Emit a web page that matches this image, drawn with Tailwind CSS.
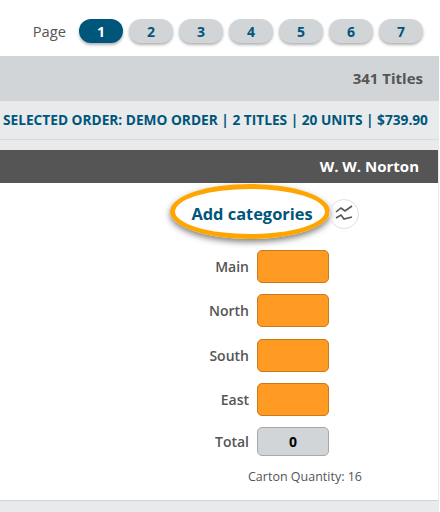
<!DOCTYPE html>
<html lang="en">

<head>
    <meta charset="UTF-8">
    <meta name="viewport" content="width=device-width, initial-scale=1.0">
    <title>Add categories</title>
    <script src="https://cdn.jsdelivr.net/npm/@tailwindcss/browser@4"></script>
</head>

<body class="bg-white font-['Open_Sans',sans-serif]">
    <div class="w-[439px] h-[512px] overflow-hidden bg-[#e8eaec]">
        <!-- pager -->
        <div class="h-[56px] bg-white flex items-start justify-end pt-[19px] pr-[16px] gap-[6px]">
            <span class="text-[14.7px] leading-[24px] text-[#555] mr-[7px]">Page</span>
            <button class="w-[44px] h-[24px] rounded-[12px] bg-[#00567a] text-white text-[14px] font-bold shadow-[0_2px_3px_rgba(0,0,0,0.3)]">1</button>
            <button class="w-[44px] h-[24px] rounded-[12px] bg-[#d1d5d8] text-[#00567a] text-[14px] font-bold shadow-[0_2px_3px_rgba(0,0,0,0.3)]">2</button>
            <button class="w-[44px] h-[24px] rounded-[12px] bg-[#d1d5d8] text-[#00567a] text-[14px] font-bold shadow-[0_2px_3px_rgba(0,0,0,0.3)]">3</button>
            <button class="w-[44px] h-[24px] rounded-[12px] bg-[#d1d5d8] text-[#00567a] text-[14px] font-bold shadow-[0_2px_3px_rgba(0,0,0,0.3)]">4</button>
            <button class="w-[44px] h-[24px] rounded-[12px] bg-[#d1d5d8] text-[#00567a] text-[14px] font-bold shadow-[0_2px_3px_rgba(0,0,0,0.3)]">5</button>
            <button class="w-[44px] h-[24px] rounded-[12px] bg-[#d1d5d8] text-[#00567a] text-[14px] font-bold shadow-[0_2px_3px_rgba(0,0,0,0.3)]">6</button>
            <button class="w-[44px] h-[24px] rounded-[12px] bg-[#d1d5d8] text-[#00567a] text-[14px] font-bold shadow-[0_2px_3px_rgba(0,0,0,0.3)]">7</button>
        </div>

        <div class="h-[45px] bg-[#d1d5d8] flex items-center justify-end pr-[16px] text-[15px] font-bold text-[#555]">341 Titles</div>

        <div class="h-[39px] border-b border-[#d8dadc] flex items-center pl-[3px] text-[13.7px] font-bold text-[#00567a] whitespace-nowrap">SELECTED ORDER: DEMO ORDER | 2 TITLES | 20 UNITS | $739.90</div>

        <div class="mt-[10px] w-[438px] h-[33px] bg-[#555] flex items-center justify-end pr-[19px] text-[15px] font-bold text-white">W. W. Norton</div>

        <div class="w-[438px] h-[318px] bg-white border-b border-[#d1d5d8] relative">
            <div class="h-[67px] flex items-start pl-[170px] pt-[1px]">
                <button class="w-[160px] h-[55px] pt-[5px] pl-[4px] rounded-[50%] border-[5px] border-[#ffa500] shadow-[0_3px_6px_rgba(0,0,0,0.5)] text-[16.4px] font-bold text-[#00567a]">Add categories</button>
                <span class="mt-[15px] -ml-[1px] w-[30px] h-[30px] rounded-full border border-[#e0e0e0] flex items-center justify-center">
                    <svg width="20" height="18" viewBox="0 0 20 18" fill="none" stroke="#555" stroke-width="1.6">
                        <path d="M2 7 L7 3 L11 6 L18 1" />
                        <path d="M2 13 L7 10 L10 14 L18 12" />
                    </svg>
                </span>
            </div>

            <div class="flex flex-col gap-[11px] pl-[200px]">
                <div class="flex items-center justify-end w-[129px] gap-[8px]">
                    <label class="text-[14px] font-[550] text-[#555]">Main</label>
                    <div class="w-[72px] h-[33px] rounded-[5px] bg-[#ff9a22] border border-[#c97a1c]"></div>
                </div>
                <div class="flex items-center justify-end w-[129px] gap-[8px]">
                    <label class="text-[14px] font-[550] text-[#555]">North</label>
                    <div class="w-[72px] h-[33px] rounded-[5px] bg-[#ff9a22] border border-[#c97a1c]"></div>
                </div>
                <div class="flex items-center justify-end w-[129px] gap-[8px] mt-[1px]">
                    <label class="text-[14px] font-[550] text-[#555]">South</label>
                    <div class="w-[72px] h-[33px] rounded-[5px] bg-[#ff9a22] border border-[#c97a1c]"></div>
                </div>
                <div class="flex items-center justify-end w-[129px] gap-[8px]">
                    <label class="text-[14px] font-[550] text-[#555]">East</label>
                    <div class="w-[72px] h-[33px] rounded-[5px] bg-[#ff9a22] border border-[#c97a1c]"></div>
                </div>
                <div class="flex items-center justify-end w-[129px] gap-[8px]">
                    <label class="text-[14px] font-[550] text-[#555]">Total</label>
                    <div class="w-[72px] h-[29px] rounded-[5px] bg-[#d1d5d8] border border-[#a8a8a8] flex items-center justify-center text-[14px] font-bold text-black">0</div>
                </div>
            </div>

            <p class="mt-[12px] pl-[248px] text-[12.5px] text-[#555]">Carton Quantity: 16</p>
        </div>
    </div>
</body>

</html>
